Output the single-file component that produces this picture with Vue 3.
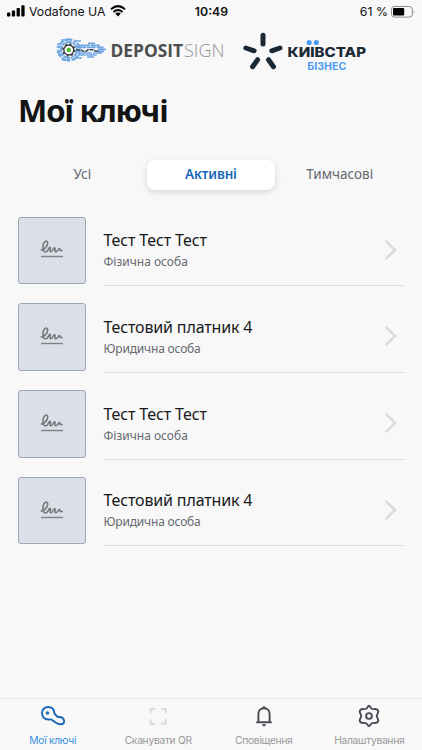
<script setup>
import { ref } from 'vue'

const tabs = [
  { id: 'all', label: 'Усі' },
  { id: 'active', label: 'Активні' },
  { id: 'temp', label: 'Тимчасові' },
]
const activeTab = ref('active')

const keys = [
  { id: 1, name: 'Тест Тест Тест', type: 'Фізична особа', kind: 'person' },
  { id: 2, name: 'Тестовий платник 4', type: 'Юридична особа', kind: 'company' },
  { id: 3, name: 'Тест Тест Тест', type: 'Фізична особа', kind: 'person' },
  { id: 4, name: 'Тестовий платник 4', type: 'Юридична особа', kind: 'company' },
]
</script>

<template>
  <div class="screen">
    <header class="status">
      <div class="carrier">
        <svg class="signal" width="18" height="12" viewBox="0 0 18 12">
          <rect x="0" y="7.6" width="3.3" height="4" rx="0.8" />
          <rect x="4.8" y="5.6" width="3.3" height="6" rx="0.8" />
          <rect x="9.6" y="3" width="3.3" height="8.6" rx="0.8" />
          <rect x="14.3" y="0.3" width="3.3" height="11.3" rx="0.8" />
        </svg>
        <span class="operator">Vodafone UA</span>
        <svg class="wifi" width="16" height="12" viewBox="0 0 16 12">
          <g fill="none" stroke="#050505" stroke-width="2">
            <path d="M1 4.3 Q8 -2 15 4.3" />
            <path d="M3.5 7 Q8 3 12.5 7" />
          </g>
          <path d="M8 11.4 L5.2 8.6 Q8 6.6 10.8 8.6 Z" />
        </svg>
      </div>
      <div class="time">10:49</div>
      <div class="power">
        <span class="percent">61 %</span>
        <svg width="25" height="12" viewBox="0 0 25 12">
          <rect x="0.5" y="0.5" width="20.8" height="10.6" rx="2.8" fill="none" stroke="#8b8b8b" />
          <rect x="2" y="2" width="11.2" height="7.6" rx="1" fill="#000" />
          <path d="M22.7 4 Q24.2 5.8 22.7 7.6 Z" fill="#999" />
        </svg>
      </div>
    </header>

    <div class="logos">
      <svg width="176" height="34" viewBox="0 0 176 34">
        <g fill="none" stroke="#6fa6e2">
          <circle cx="19" cy="17" r="10.6" stroke-width="2.2" stroke-dasharray="5 1 8 1.5 3 1" />
          <circle cx="19" cy="17" r="8" stroke-width="2" stroke-dasharray="7 .6 3 .6" />
          <path d="M7 11h4M6.5 14h4M8 22h4M6.5 19h3M11 7h6M26 8h5M27 25h5M12 27h8" stroke-width="1.6" />
          <path d="M28 12.4h12m1 0h9M27 14.4h9m.6 0h9m1 0h7M48 16.4h8M48 18.4h6M30 20h12m.8 0h9M28 22h7m.6 0h11M38 10.4h7M37 24h7" stroke-width="1.7" />
        </g>
        <path d="M26 17h5l2 1.3h3l2-1.5h5l2 1.2h4" fill="none" stroke="#36465a" stroke-width="1.5" stroke-dasharray="4 .8" />
        <circle cx="18.8" cy="17" r="5" fill="#fff" stroke="#34383d" stroke-width="1.3" />
        <circle cx="18.8" cy="17" r="6" fill="none" stroke="#34383d" stroke-width="1.5" stroke-dasharray="2 2.7" />
        <circle cx="18.8" cy="17" r="2.3" fill="#55b82e" />
        <text class="deposit" x="60.5" y="23.8" textLength="72.5" lengthAdjust="spacingAndGlyphs">DEPOSIT</text>
        <text class="sign" x="134" y="23.8" textLength="40.5" lengthAdjust="spacingAndGlyphs">SIGN</text>
      </svg>
      <svg width="128" height="42" viewBox="0 0 128 42">
        <g stroke="#1a2936" stroke-width="5" stroke-linecap="round">
          <path d="M21 5.3v8.7M3.8 18l8.3 2.8M38 18l-8.2 2.8M15.6 29.7l-5 7M26.5 29.7l5 7" />
        </g>
        <text class="kyivstar" x="45.5" y="27.2" textLength="78.5" lengthAdjust="spacingAndGlyphs">КИЇВСТАР</text>
        <rect x="62.5" y="8" width="17" height="9" fill="#f8f8f8" />
        <circle cx="67.2" cy="12.5" r="2.6" fill="#4d9bf0" />
        <circle cx="74.3" cy="12.5" r="2.6" fill="#4d9bf0" />
        <text class="business" x="65.3" y="40" textLength="39" lengthAdjust="spacingAndGlyphs">БІЗНЕС</text>
      </svg>
    </div>

    <h1>Мої ключі</h1>

    <div class="tabs">
      <button
        v-for="tab in tabs"
        :key="tab.id"
        :class="['tab', tab.id, { active: tab.id === activeTab }]"
        @click="activeTab = tab.id"
      ><span>{{ tab.label }}</span></button>
    </div>

    <main class="list">
      <article v-for="item in keys" :key="item.id" class="key">
        <div class="thumb">
          <svg width="24" height="20" viewBox="0 0 24 20">
            <path d="M1.3 10.9c2 .6 6.6-3.7 6.4-7C7.5.8 3.9 1.8 3.2 5.8c-.6 3.7-.1 7.3 2.3 7.2 2.8-.1 3.3-5 4.5-4.7 1.3.2-1 4.3.8 4.5 2 .2 2.4-4.4 3.9-4.1 1.5.3-1 4.1 1.1 4.1 2 0 2.5-3.7 3.7-3.3 1.1.4-.6 2.6 2.6 2" fill="none" stroke="#76787b" stroke-width="1.6" stroke-linecap="round" />
            <path d="M1 17.5h22" stroke="#808285" stroke-width="1.4" />
          </svg>
        </div>
        <div class="details" :class="item.kind">
          <div>
            <div class="name">{{ item.name }}</div>
            <div class="type">{{ item.type }}</div>
          </div>
          <svg class="chevron" width="14" height="22" viewBox="0 0 14 22">
            <path d="M1.7 1.8 L11 11 L1.7 20.2" fill="none" stroke="#d9dbe1" stroke-width="2.5" />
          </svg>
        </div>
      </article>
    </main>

    <nav class="bottom">
      <a class="nav-item current">
        <svg width="26" height="24" viewBox="0 0 26 24">
          <path d="M8.2 3C4.4 3 2 5.7 2 9.1c0 3.8 2.7 6.4 6.4 6.4 1.5 0 2.5-.5 3.8.6 2.4 2.1 4.9 4.2 8.5 4.2 2.6 0 3.8-1.6 3.4-3.6-.5-2.4-2.6-3.6-4.6-3.7-1.5-.1-1.8.3-2.7-.9-1.1-1.4-2.4-1.9-2.6-3.8C13.8 5 11.6 3 8.2 3Z" fill="none" stroke="#1768b8" stroke-width="1.9" />
          <circle cx="7.5" cy="9" r="1.8" fill="#1768b8" />
        </svg>
        <span>Мої ключі</span>
      </a>
      <a class="nav-item scan">
        <svg width="24" height="24" viewBox="0 0 24 24">
          <path d="M4.5 9.5V5h4.5M15.2 5h4.5v4.5M19.7 15.2v4.5h-4.5M9 19.7H4.5v-4.5" fill="none" stroke="#d8d9dc" stroke-width="2" />
        </svg>
        <span>Сканувати QR</span>
      </a>
      <a class="nav-item alerts">
        <svg width="24" height="24" viewBox="0 0 24 24">
          <path d="M4.3 18.3h15.4M6.4 18V9.8c0-3.4 2.4-5.6 5.6-5.6s5.6 2.2 5.6 5.6V18" fill="none" stroke="#484c55" stroke-width="1.9" />
          <path d="M10.5 4a1.5 1.5 0 0 1 3 0ZM10.5 20.5h3a1.5 1.5 0 0 1-3 0Z" fill="#484c55" stroke="#484c55" stroke-width=".6" />
        </svg>
        <span>Сповіщення</span>
      </a>
      <a class="nav-item settings">
        <svg width="24" height="24" viewBox="0 0 24 24">
          <path d="M12 1.8 C13.2 1.8 13.5 4 14.9 4.8 C16.3 5.6 18.9 4.4 20.4 5.7 C23 7.5 19.8 9.8 19.8 12 S23 16.5 20.4 18.3 C18.9 19.6 16.3 18.4 14.9 19.2 C13.5 20 13.2 22.2 12 22.2 S10.5 20 9.1 19.2 C7.7 18.4 5.1 19.6 3.6 18.3 C1 16.5 4.2 14.2 4.2 12 S1 7.5 3.6 5.7 C5.1 4.4 7.7 5.6 9.1 4.8 C10.5 4 10.8 1.8 12 1.8Z" fill="none" stroke="#484c55" stroke-width="1.9" stroke-linejoin="round" />
          <circle cx="12" cy="12" r="2.9" fill="none" stroke="#484c55" stroke-width="1.9" />
        </svg>
        <span>Налаштування</span>
      </a>
    </nav>
  </div>
</template>

<style>
body {
  background: #f8f8f8;
}
</style>

<style scoped>
.screen {
  box-sizing: border-box;
  width: 422px;
  height: 750px;
  display: flex;
  flex-direction: column;
  overflow: hidden;
  background: #f8f8f8;
  color: #17191c;
  font-family: "Noto Sans", sans-serif;
  white-space: nowrap;
}
.status {
  height: 22px;
  padding: 0 6px 0 7px;
  display: grid;
  grid-template-columns: 1fr auto 1fr;
  font: 12.3px/23px Inter, sans-serif;
  color: #111;
}
.carrier,
.power {
  display: flex;
  align-items: center;
}
.power {
  justify-content: flex-end;
  gap: 3px;
}
.operator {
  margin: 0 4px 0 4px;
}
.signal,
.wifi {
  margin-top: -2px;
}
.time {
  font-weight: 600;
}
.logos {
  height: 42px;
  padding: 8px 0 0 50px;
  display: flex;
  align-items: center;
  gap: 16px;
}
.logos svg:first-child {
  margin-top: -3px;
}
.deposit {
  font: 700 18px "Open Sans", sans-serif;
  fill: #4d4d4d;
}
.sign {
  font: 300 18px "Open Sans", sans-serif;
  fill: #929292;
}
.kyivstar {
  font: 800 13.5px Inter, sans-serif;
  fill: #1a2936;
}
.business {
  font: 700 10px Inter, sans-serif;
  fill: #4d9bf0;
}
h1 {
  margin: 16px 0 0 18px;
  font-size: 31px;
  line-height: 44px;
  font-weight: 700;
  letter-spacing: -1.1px;
  color: #111315;
}
.tabs {
  margin: 28px 18px 0;
  display: grid;
  grid-template-columns: repeat(3, 1fr);
  height: 30px;
}
.tab {
  border: 0;
  padding: 0 0 2px;
  border-radius: 8px;
  background: none;
  font: 13.5px/28px "Noto Sans", sans-serif;
  color: #62666d;
}
.tab.active {
  background: #fff;
  color: #1768b8;
  font-weight: 600;
  letter-spacing: -0.15px;
  box-shadow: 0 2px 7px rgba(0, 0, 0, 0.14);
}
.list {
  padding: 26.5px 18px 0;
  display: flex;
  flex-direction: column;
  gap: 17.3px;
}
.key {
  height: 69.5px;
  display: flex;
  gap: 18px;
}
.thumb {
  box-sizing: border-box;
  width: 67.5px;
  height: 67.5px;
  border: 1px solid #9aa7b4;
  border-radius: 3px;
  background: #dcdfe7;
  display: flex;
  align-items: center;
  justify-content: center;
}
.thumb svg {
  margin-bottom: 2px;
}
.details {
  flex: 1;
  box-sizing: border-box;
  border-bottom: 1px solid #dcdfe5;
  display: flex;
  justify-content: space-between;
}
.name {
  padding-top: 12.5px;
  font-size: 16px;
  line-height: 22px;
  letter-spacing: -0.16px;
}
.type {
  font-size: 12px;
  line-height: 21px;
  color: #666a70;
}
.company .type {
  letter-spacing: -0.18px;
}
.chevron {
  margin: 22px 6px 0 0;
}
.bottom {
  box-sizing: border-box;
  margin-top: auto;
  height: 52px;
  padding-top: 5px;
  border-top: 1px solid #e6e6e7;
  display: grid;
  grid-template-columns: repeat(4, 1fr);
}
.nav-item {
  display: flex;
  flex-direction: column;
  align-items: center;
  font: 10.3px/25px Inter, sans-serif;
  letter-spacing: -0.3px;
  color: #98999b;
}
.nav-item.current {
  color: #3b8ee0;
}
</style>
